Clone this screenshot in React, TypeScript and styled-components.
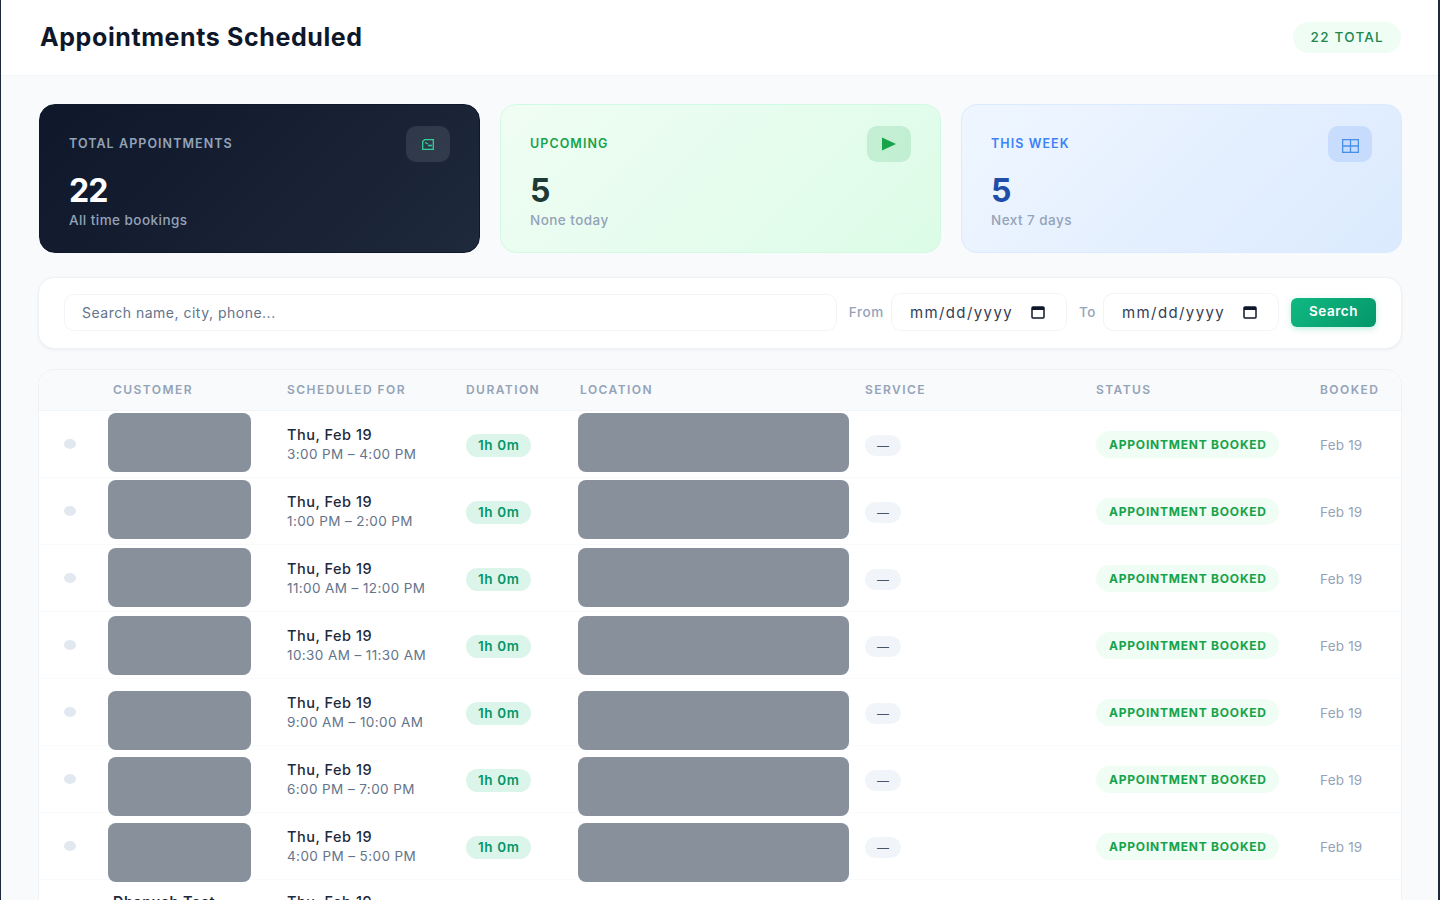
import React from 'react';
import styled, { createGlobalStyle } from 'styled-components';

type Tone = 'dark' | 'green' | 'blue';

type Row = {
  time: string;
  top: number;
};

const rows: Row[] = [
  { time: '3:00 PM – 4:00 PM', top: 2 },
  { time: '1:00 PM – 2:00 PM', top: 2 },
  { time: '11:00 AM – 12:00 PM', top: 3 },
  { time: '10:30 AM – 11:30 AM', top: 4 },
  { time: '9:00 AM – 10:00 AM', top: 12 },
  { time: '6:00 PM – 7:00 PM', top: 11 },
  { time: '4:00 PM – 5:00 PM', top: 10 },
];

const GlobalStyle = createGlobalStyle`
  html, body {
    margin: 0;
    padding: 0;
    height: 100%;
    overflow: hidden;
    background: #f8fafc;
  }
  * {
    box-sizing: border-box;
  }
`;

const Page = styled.div`
  height: 900px;
  overflow: hidden;
  background: #f8fafc;
  border-left: 1px solid #1e293b;
  border-right: 2px solid #1e293b;
  font-family: Inter, 'Liberation Sans', sans-serif;
  color: #0f172a;
`;

const Header = styled.header`
  height: 76px;
  padding: 0 37px 1px 39px;
  display: flex;
  align-items: center;
  justify-content: space-between;
  background: #fff;
  border-bottom: 1px solid #f1f5f9;
`;

const Title = styled.h1`
  margin: 0;
  font-size: 25px;
  font-weight: 700;
  letter-spacing: 0.6px;
  color: #0f172a;
`;

const TotalPill = styled.span`
  height: 31px;
  padding: 0 17px 0 18px;
  display: inline-flex;
  align-items: center;
  border-radius: 16px;
  background: #f0fdf4;
  color: #22874f;
  font-size: 13.5px;
  font-weight: 500;
  letter-spacing: 1.25px;
`;

const Content = styled.main`
  padding: 28px 36px 0 38px;
`;

const Cards = styled.section`
  display: grid;
  grid-template-columns: 441px 441px 1fr;
  gap: 20px;
`;

const cardBg: Record<Tone, string> = {
  dark: 'linear-gradient(135deg, #0f172a, #1e293b)',
  green: 'linear-gradient(135deg, #f0fdf4, #dcfce7)',
  blue: 'linear-gradient(135deg, #eff6ff, #dbeafe)',
};

const cardBorder: Record<Tone, string> = {
  dark: '#0f172a',
  green: '#d1fae5',
  blue: '#dbeafe',
};

const labelColor: Record<Tone, string> = {
  dark: '#94a3b8',
  green: '#16a34a',
  blue: '#3b82f6',
};

const valueColor: Record<Tone, string> = {
  dark: '#ffffff',
  green: '#1e3a34',
  blue: '#1e4ea8',
};

const iconBg: Record<Tone, string> = {
  dark: 'rgba(255, 255, 255, 0.1)',
  green: 'rgba(22, 163, 74, 0.15)',
  blue: 'rgba(59, 130, 246, 0.15)',
};

const Card = styled.article<{ $tone: Tone }>`
  height: 149px;
  padding: 21px 29px 0;
  display: flex;
  justify-content: space-between;
  border-radius: 16px;
  background: ${(props) => cardBg[props.$tone]};
  border: 1px solid ${(props) => cardBorder[props.$tone]};
`;

const CardLabel = styled.div<{ $tone: Tone }>`
  margin-top: 10px;
  font-size: 12.5px;
  line-height: 15px;
  font-weight: 600;
  letter-spacing: 1.07px;
  color: ${(props) => labelColor[props.$tone]};
`;

const CardValue = styled.div<{ $tone: Tone }>`
  margin-top: 20px;
  font-size: 32px;
  line-height: 40px;
  font-weight: 700;
  letter-spacing: -1px;
  color: ${(props) => valueColor[props.$tone]};
`;

const CardNote = styled.div`
  font-size: 13.5px;
  line-height: 18px;
  font-weight: 500;
  letter-spacing: 0.45px;
  color: #94a3b8;
`;

const CardIcon = styled.div<{ $tone: Tone }>`
  width: 44px;
  height: 36px;
  display: flex;
  align-items: center;
  justify-content: center;
  border-radius: 10px;
  background: ${(props) => iconBg[props.$tone]};
`;

const FilterBar = styled.section`
  height: 72px;
  margin: 24px 0 0 -1px;
  padding: 0 25px 2px 25px;
  display: flex;
  align-items: center;
  background: #fff;
  border: 1px solid #eef2f7;
  border-radius: 16px;
  box-shadow: 0 1px 3px rgba(15, 23, 42, 0.06);
`;

const SearchBox = styled.div`
  flex: 1;
  height: 37px;
  padding: 0 17px;
  display: flex;
  align-items: center;
  border: 1px solid #f1f5f9;
  border-radius: 10px;
  color: #64748b;
  font-size: 14px;
  letter-spacing: 0.5px;
`;

const FieldLabel = styled.span`
  margin: 0 7px 0 12px;
  color: #94a3b8;
  font-size: 13.5px;
  font-weight: 500;
  letter-spacing: 0.6px;
`;

const DateBox = styled.div`
  width: 176px;
  height: 38px;
  padding: 0 20px 0 18px;
  display: flex;
  align-items: center;
  justify-content: space-between;
  border: 1px solid #f1f5f9;
  border-radius: 10px;
  color: #334155;
  font-size: 15px;
  letter-spacing: 1.4px;
`;

const SearchButton = styled.button`
  width: 85px;
  height: 29px;
  margin-left: 12px;
  padding: 0 0 2px;
  border: none;
  border-radius: 6px;
  background: linear-gradient(135deg, #10b981, #059669);
  box-shadow: 0 2px 6px rgba(16, 185, 129, 0.25);
  color: #fff;
  font-family: inherit;
  font-size: 13.5px;
  font-weight: 600;
  letter-spacing: 0.5px;
`;

const TableCard = styled.section`
  margin: 20px 0 0 -1px;
  background: #fff;
  border: 1px solid #eef2f7;
  border-radius: 16px 16px 0 0;
`;

const columns = '74px 174px 179px 114px 285px 231px 224px 1fr';

const HeadRow = styled.div`
  height: 41px;
  padding-bottom: 1px;
  display: grid;
  grid-template-columns: ${columns};
  align-items: center;
  background: #f8fafc;
  border-bottom: 1px solid #f1f5f9;
  border-radius: 16px 16px 0 0;
`;

const HeadCell = styled.span`
  font-size: 12px;
  font-weight: 600;
  letter-spacing: 1.45px;
  color: #94a3b8;
`;

const BodyRow = styled.div`
  height: 67px;
  display: grid;
  grid-template-columns: ${columns};
  grid-template-rows: 66px;
  align-items: center;
  border-bottom: 1px solid #f8fafc;
`;

const DotCell = styled.div`
  padding-left: 25px;
  display: flex;
  align-items: center;
`;

const Dot = styled.span`
  width: 12px;
  height: 10px;
  border-radius: 50%;
  background: #e2e8f0;
`;

const Redacted = styled.div<{ $top: number; $width: number; $left: number }>`
  position: relative;
  z-index: 1;
  align-self: start;
  width: ${(props) => props.$width}px;
  height: 59px;
  margin-top: ${(props) => props.$top}px;
  margin-left: ${(props) => props.$left}px;
  border-radius: 8px;
  background: #87909b;
`;

const DateLine = styled.div`
  font-size: 14.5px;
  line-height: 20px;
  font-weight: 500;
  letter-spacing: 0.5px;
  color: #1e293b;
`;

const TimeLine = styled.div`
  font-size: 13.5px;
  line-height: 18px;
  letter-spacing: 0.4px;
  color: #64748b;
`;

const DurationPill = styled.span`
  justify-self: start;
  height: 23px;
  margin-top: 2px;
  padding: 0 12px;
  display: inline-flex;
  align-items: center;
  border-radius: 12px;
  background: #dcf5ea;
  color: #059669;
  font-size: 13.5px;
  font-weight: 600;
  letter-spacing: 0.6px;
`;

const ServicePill = styled.span`
  justify-self: start;
  width: 36px;
  height: 21px;
  margin-top: 2px;
  display: inline-flex;
  align-items: center;
  justify-content: center;
  border-radius: 11px;
  background: #f1f5f9;
  color: #475569;
  font-size: 12px;
`;

const StatusPill = styled.span`
  justify-self: start;
  height: 27px;
  padding: 0 12px 0 13px;
  display: inline-flex;
  align-items: center;
  border-radius: 14px;
  background: #f0fdf4;
  color: #16a34a;
  font-size: 12px;
  font-weight: 700;
  letter-spacing: 0.78px;
  white-space: nowrap;
`;

const BookedCell = styled.span`
  margin-top: 2px;
  font-size: 13.5px;
  letter-spacing: 0.2px;
  color: #94a3b8;
`;

const PartialName = styled.div`
  font-size: 14.5px;
  line-height: 20px;
  font-weight: 600;
  letter-spacing: 0.5px;
  color: #1e293b;
`;

const PartialRow = styled(BodyRow)`
  align-items: start;
  padding-top: 12px;
`;

const CalendarIcon = () => (
  <svg width="16" height="16" viewBox="0 0 16 16" fill="none">
    <rect x="2" y="3" width="12" height="11" rx="1" stroke="#0f172a" strokeWidth="1.5" />
    <rect x="2" y="3" width="12" height="3" fill="#0f172a" />
  </svg>
);

const MailIcon = () => (
  <svg width="12" height="11" viewBox="0 0 12 11" fill="none" stroke="#2fd39a" strokeWidth="1.3">
    <path d="M2.5 0.7 H11.3 V10.3 H0.7 V2.5 Z" />
    <path d="M3 3.5 L6 5 M6 6.5 H10" />
  </svg>
);

const PlayIcon = () => (
  <svg width="14" height="14" viewBox="0 0 14 14">
    <path d="M0 0.5 L14 7 L0 13.5 Z" fill="#16a34a" />
  </svg>
);

const GridIcon = () => (
  <svg width="17" height="17" viewBox="0 -3 17 17" fill="none" stroke="#4a8fe6" strokeWidth="1.3">
    <rect x="0.65" y="0.65" width="15.7" height="12.7" />
    <path d="M8.5 0.5 V13.5 M0.5 7 H16.5" />
  </svg>
);

const App: React.FC = (): JSX.Element => (
  <Page>
    <GlobalStyle />
    <Header>
      <Title>Appointments Scheduled</Title>
      <TotalPill>22 TOTAL</TotalPill>
    </Header>
    <Content>
      <Cards>
        <Card $tone="dark">
          <div>
            <CardLabel $tone="dark">TOTAL APPOINTMENTS</CardLabel>
            <CardValue $tone="dark">22</CardValue>
            <CardNote>All time bookings</CardNote>
          </div>
          <CardIcon $tone="dark">
            <MailIcon />
          </CardIcon>
        </Card>
        <Card $tone="green">
          <div>
            <CardLabel $tone="green">UPCOMING</CardLabel>
            <CardValue $tone="green">5</CardValue>
            <CardNote>None today</CardNote>
          </div>
          <CardIcon $tone="green">
            <PlayIcon />
          </CardIcon>
        </Card>
        <Card $tone="blue">
          <div>
            <CardLabel $tone="blue">THIS WEEK</CardLabel>
            <CardValue $tone="blue">5</CardValue>
            <CardNote>Next 7 days</CardNote>
          </div>
          <CardIcon $tone="blue">
            <GridIcon />
          </CardIcon>
        </Card>
      </Cards>
      <FilterBar>
        <SearchBox>Search name, city, phone...</SearchBox>
        <FieldLabel>From</FieldLabel>
        <DateBox>
          mm/dd/yyyy
          <CalendarIcon />
        </DateBox>
        <FieldLabel>To</FieldLabel>
        <DateBox>
          mm/dd/yyyy
          <CalendarIcon />
        </DateBox>
        <SearchButton>Search</SearchButton>
      </FilterBar>
      <TableCard>
        <HeadRow>
          <span />
          <HeadCell>CUSTOMER</HeadCell>
          <HeadCell>SCHEDULED FOR</HeadCell>
          <HeadCell>DURATION</HeadCell>
          <HeadCell>LOCATION</HeadCell>
          <HeadCell>SERVICE</HeadCell>
          <HeadCell>STATUS</HeadCell>
          <HeadCell>BOOKED</HeadCell>
        </HeadRow>
        {rows.map((row, index) => (
          <BodyRow key={`Row-${index}`}>
            <DotCell>
              <Dot />
            </DotCell>
            <Redacted $top={row.top} $width={143} $left={-5} />
            <div>
              <DateLine>Thu, Feb 19</DateLine>
              <TimeLine>{row.time}</TimeLine>
            </div>
            <DurationPill>1h 0m</DurationPill>
            <Redacted $top={row.top} $width={271} $left={-2} />
            <ServicePill>—</ServicePill>
            <StatusPill>APPOINTMENT BOOKED</StatusPill>
            <BookedCell>Feb 19</BookedCell>
          </BodyRow>
        ))}
        <PartialRow>
          <span />
          <PartialName>Dhanush Test</PartialName>
          <DateLine>Thu, Feb 19</DateLine>
        </PartialRow>
      </TableCard>
    </Content>
  </Page>
);

export default App;
